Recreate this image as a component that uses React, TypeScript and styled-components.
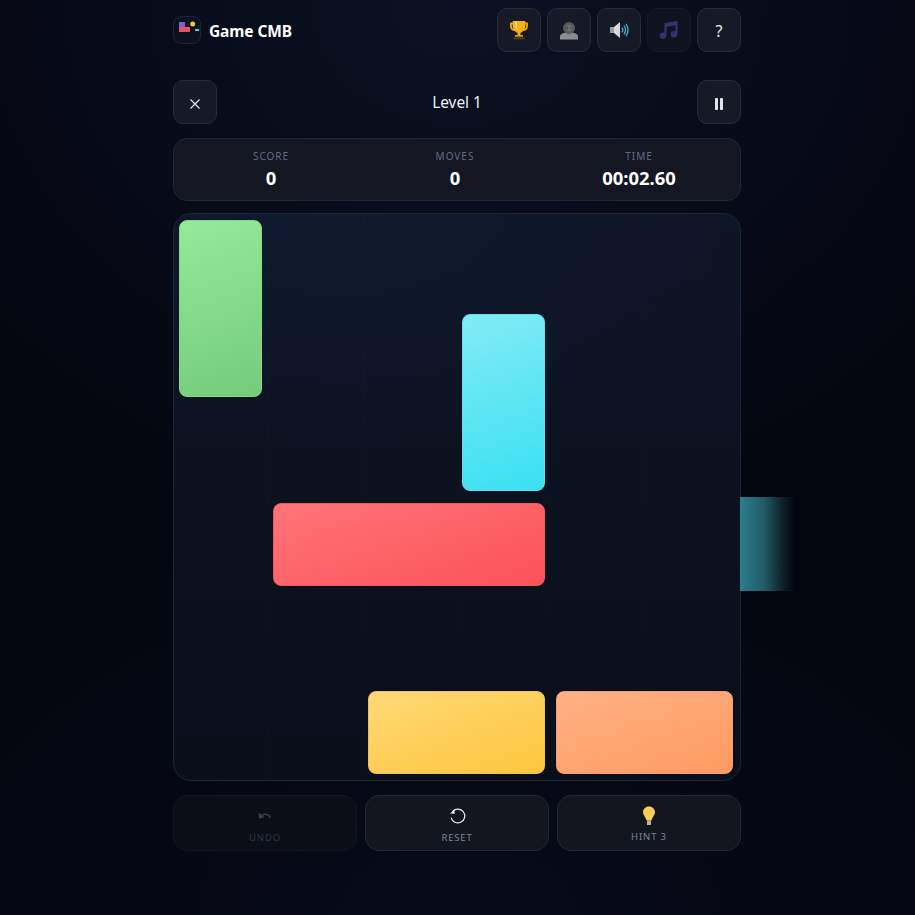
import React from "react";
import styled, { createGlobalStyle } from "styled-components";

const GlobalStyle = createGlobalStyle`
  html, body {
    margin: 0;
    padding: 0;
    height: 100%;
    overflow: hidden;
    background: #04060f;
    font-family: "Noto Sans", "Open Sans", sans-serif;
  }
`;

const Page = styled.div`
  width: 915px;
  height: 915px;
  padding-top: 8px;
  box-sizing: border-box;
  background:
    radial-gradient(ellipse 70% 60% at 50% 0%, #0b1122 0%, rgba(11, 17, 34, 0) 100%),
    radial-gradient(ellipse 70% 45% at 50% 100%, #070b18 0%, rgba(7, 11, 24, 0) 100%),
    #04060f;
`;

const Column = styled.div`
  width: 568px;
  margin-left: 173px;
  display: flex;
  flex-direction: column;
`;

const TopBar = styled.header`
  display: flex;
  align-items: center;
  justify-content: space-between;
  height: 44px;
  margin-bottom: 28px;
`;

const Brand = styled.div`
  display: flex;
  align-items: center;
  gap: 8px;
`;

const LogoBox = styled.div`
  width: 28px;
  height: 28px;
  box-sizing: border-box;
  border-radius: 8px;
  border: 1px solid #1b2537;
  background: #0c111f;
  display: flex;
  align-items: center;
  justify-content: center;
`;

const BrandName = styled.span`
  color: #fff;
  font-size: 15.5px;
  font-weight: 700;
  letter-spacing: -0.1px;
  margin-top: 1px;
`;

const IconRow = styled.div`
  display: flex;
  gap: 6px;
`;

const IconButton = styled.button<{ $dim?: boolean }>`
  width: 44px;
  height: 44px;
  padding: 0;
  box-sizing: border-box;
  border-radius: 10px;
  border: 1px solid ${(p) => (p.$dim ? "#151a28" : "#262c3b")};
  background: ${(p) => (p.$dim ? "#0f1320" : "#161a27")};
  color: #e8edf5;
  font-family: inherit;
  font-size: 16px;
  display: flex;
  align-items: center;
  justify-content: center;
`;

const HelpMark = styled.span`
  margin-top: 1px;
`;

const LevelBar = styled.div`
  display: flex;
  align-items: center;
  justify-content: space-between;
  height: 44px;
  margin-bottom: 14px;
`;

const LevelTitle = styled.div`
  color: #eef2f8;
  font-size: 15.4px;
  font-weight: 400;
  margin-top: 1px;
`;

const Stats = styled.section`
  height: 63px;
  box-sizing: border-box;
  border-radius: 14px;
  border: 1px solid #222735;
  background: #141622;
  display: grid;
  grid-template-columns: 1fr 1fr 1fr;
  padding: 0 9px 0 5px;
  margin-bottom: 12px;
`;

const Stat = styled.div`
  display: flex;
  flex-direction: column;
  align-items: center;
  padding-top: 10px;
`;

const StatLabel = styled.div`
  color: #636c88;
  font-size: 10px;
  line-height: 14px;
  letter-spacing: 1px;
`;

const StatValue = styled.div`
  color: #fff;
  font-size: 18.4px;
  line-height: 28px;
  font-weight: 700;
  margin-top: 1px;
`;

const Board = styled.main`
  position: relative;
  width: 568px;
  height: 568px;
  box-sizing: border-box;
  padding: 6px 7px 6px 5px;
  border: 1px solid #1f2533;
  border-radius: 18px;
  background:
    linear-gradient(rgba(255, 255, 255, 0.007) 1px, transparent 1px) 0 0 / 94.33px 94.33px,
    linear-gradient(90deg, rgba(255, 255, 255, 0.01) 1px, transparent 1px) 0 0 / 94.33px 94.33px,
    radial-gradient(ellipse 75% 40% at 30% 0%, #0f1a2f 0%, rgba(15, 26, 47, 0) 100%),
    linear-gradient(180deg, #0d1424 0%, #0c1120 45%, #0a0e19 100%);
  display: grid;
  grid-template-columns: repeat(6, 1fr);
  grid-template-rows: repeat(6, 1fr);
  gap: 11.5px;
  margin-bottom: 14px;
`;

const Block = styled.div<{ $from: string; $to: string; $col: string; $row: string; $edge: string }>`
  grid-column: ${(p) => p.$col};
  grid-row: ${(p) => p.$row};
  border-radius: 8px;
  box-sizing: border-box;
  border: 1px solid ${(p) => p.$edge};
  background: linear-gradient(160deg, ${(p) => p.$from}, ${(p) => p.$to});
`;

const ExitGlow = styled.div`
  position: absolute;
  left: 566px;
  top: 283px;
  width: 55px;
  height: 94px;
  background: linear-gradient(90deg, #2b7f8c 0%, #1f5a66 45%, rgba(20, 50, 60, 0.5) 80%, rgba(10, 20, 30, 0) 100%);
`;

const Actions = styled.div`
  display: grid;
  grid-template-columns: repeat(3, 1fr);
  gap: 8px;
  height: 56px;
`;

const ActionButton = styled.button<{ $off?: boolean }>`
  box-sizing: border-box;
  padding: 9px 0 0;
  border-radius: 14px;
  border: 1px solid ${(p) => (p.$off ? "#141722" : "#222733")};
  background: ${(p) => (p.$off ? "#0b0e17" : "#13161f")};
  font-family: inherit;
  display: flex;
  flex-direction: column;
  align-items: center;
  justify-content: flex-start;
`;

const ActionIcon = styled.span`
  height: 22px;
  display: flex;
  align-items: center;
  justify-content: center;
`;

const ActionLabel = styled.span<{ $off?: boolean; $raised?: boolean }>`
  color: ${(p) => (p.$off ? "#2f3441" : "#7c8499")};
  font-size: 9.5px;
  line-height: 14px;
  letter-spacing: 0.85px;
  margin-top: ${(p) => (p.$raised ? "3px" : "4px")};
`;

const LoweredSvg = styled.svg`
  margin-top: 3px;
`;

const Logo = () => (
  <svg width="26" height="26" viewBox="0 0 26 26">
    <rect x="5" y="5" width="6" height="6.500" fill="#7a5fd0" />
    <rect x="5" y="10" width="11" height="5" rx="0.500" fill="#ef4f5f" />
    <circle cx="18.700" cy="7" r="2.500" fill="#f3c23f" />
    <rect x="21" y="12" width="4.200" height="2" fill="#35d6c4" />
  </svg>
);

const Trophy = () => (
  <svg width="20" height="20" viewBox="0 0 20 20">
    <path d="M4.500 3.500H2v2.700C2 8.500 4 10 6.500 10.200M15.500 3.500H18v2.700c0 2.300-2 3.800-4.500 4" fill="#3a1d18" stroke="#f2aa14" strokeWidth="1.800" />
    <path d="M3.700 1h12.600v4.700c0 3.600-2.500 6.300-4.800 7v2.300h-3v-2.300C6.200 12 3.700 9.300 3.700 5.700z" fill="#f7b017" />
    <path d="M6 1.500h2v5c0 1.500.4 2.500 1 3.500C7 9.300 6 7 6 5z" fill="#ffd65f" />
    <rect x="6" y="15" width="8" height="1.800" fill="#e49c10" />
    <rect x="4.500" y="16.800" width="11" height="2.700" rx="0.500" fill="#43362a" />
  </svg>
);

const Bust = () => (
  <svg width="20" height="20" viewBox="0 0 20 20">
    <path d="M1 19.500v-2.800c0-2.800 3-4.200 9-4.200s9 1.400 9 4.200v2.800z" fill="#8b8d90" />
    <circle cx="10" cy="8" r="6" fill="#56585b" />
    <path d="M7.500 5.500c2-1 5-1 6 1 .5 2.500-1 5-3.500 5-2 0-3-2-2.500-6z" fill="#6b6d70" />
    <circle cx="8.500" cy="8" r="0.700" fill="#2b2c2e" />
    <circle cx="12" cy="8" r="0.700" fill="#2b2c2e" />
  </svg>
);

const Speaker = () => (
  <svg width="20" height="20" viewBox="0 0 20 20">
    <rect x="1" y="7" width="4" height="6" fill="#9a9ea3" />
    <path d="M5 7l6-5v16l-6-5z" fill="#d5d8dc" />
    <g fill="none" stroke="#3ab4cc" strokeWidth="1.300">
      <path d="M13 7.500c1 1.500 1 3.500 0 5" />
      <path d="M15 5.500c1.800 2.800 1.800 6.200 0 9" />
      <path d="M17 3.800c2.500 3.800 2.500 8.600 0 12.400" />
    </g>
  </svg>
);

const Notes = () => (
  <svg width="20" height="20" viewBox="0 0 20 20">
    <path d="M6.500 15.500V4l11-2v12" fill="none" stroke="#372f70" strokeWidth="2.200" />
    <path d="M6.500 4l11-2v3l-11 2z" fill="#372f70" />
    <circle cx="4" cy="15.700" r="3.200" fill="#372f70" />
    <circle cx="15" cy="14.200" r="3.200" fill="#372f70" />
  </svg>
);

const Cross = () => (
  <LoweredSvg width="12" height="12" viewBox="0 0 12 12">
    <path d="M1.500 1.500l9 9M10.500 1.500l-9 9" stroke="#e3e7ee" strokeWidth="1.200" fill="none" />
  </LoweredSvg>
);

const Pause = () => (
  <LoweredSvg width="8" height="12" viewBox="0 0 8 12">
    <rect x="0" y="0" width="3" height="12" rx="0.700" fill="#dfe4ec" />
    <rect x="5" y="0" width="3" height="12" rx="0.700" fill="#dfe4ec" />
  </LoweredSvg>
);

const UndoArrow = () => (
  <svg width="16" height="12" viewBox="0 0 16 12">
    <path d="M4 6c2.500-2.600 7-2.600 9.500 1.500" fill="none" stroke="#3a3d45" strokeWidth="1.600" />
    <path d="M1.500 2.500l.5 6 5.500-1z" fill="#3a3d45" />
  </svg>
);

const ResetArrow = () => (
  <svg width="17" height="17" viewBox="0 0 16 16">
    <path d="M3.500 3.200A6.500 6.500 0 1 1 2 9" fill="none" stroke="#e8edf3" strokeWidth="1.100" />
    <path d="M1 5.200l4.500.3-.6-4z" fill="#e8edf3" />
  </svg>
);

const Bulb = () => (
  <svg width="14" height="20" viewBox="0 0 14 20">
    <path d="M7 .5c3.400 0 6 2.500 6 5.600 0 2.800-2.300 4.500-3.500 8.400h-5C3.300 10.600 1 8.900 1 6.100 1 3 3.600.5 7 .5z" fill="#f7ce5c" />
    <rect x="5" y="14.500" width="4" height="4.500" fill="#b9b3a0" />
  </svg>
);

const blocks = [
  { col: "1", row: "1 / span 2", from: "#94ea98", to: "#74cb7a", edge: "#84d98a" },
  { col: "4", row: "2 / span 2", from: "#82ebf5", to: "#39e0f2", edge: "#5fe0ee" },
  { col: "2 / span 3", row: "4", from: "#ff7478", to: "#fb5258", edge: "#e9595f" },
  { col: "3 / span 2", row: "6", from: "#ffd977", to: "#fdc63c", edge: "#eec25a" },
  { col: "5 / span 2", row: "6", from: "#ffb186", to: "#ff9a5f", edge: "#eda076" },
];

const stats = [
  { label: "SCORE", value: "0" },
  { label: "MOVES", value: "0" },
  { label: "TIME", value: "00:02.60" },
];

export default function App() {
  return (
    <Page>
      <GlobalStyle />
      <Column>
        <TopBar>
          <Brand>
            <LogoBox>
              <Logo />
            </LogoBox>
            <BrandName>Game CMB</BrandName>
          </Brand>
          <IconRow>
            <IconButton aria-label="Leaderboard">
              <Trophy />
            </IconButton>
            <IconButton aria-label="Profile">
              <Bust />
            </IconButton>
            <IconButton aria-label="Sound">
              <Speaker />
            </IconButton>
            <IconButton $dim aria-label="Music">
              <Notes />
            </IconButton>
            <IconButton aria-label="Help">
              <HelpMark>?</HelpMark>
            </IconButton>
          </IconRow>
        </TopBar>

        <LevelBar>
          <IconButton aria-label="Close">
            <Cross />
          </IconButton>
          <LevelTitle>Level 1</LevelTitle>
          <IconButton aria-label="Pause">
            <Pause />
          </IconButton>
        </LevelBar>

        <Stats>
          {stats.map((s) => (
            <Stat key={s.label}>
              <StatLabel>{s.label}</StatLabel>
              <StatValue>{s.value}</StatValue>
            </Stat>
          ))}
        </Stats>

        <Board>
          {blocks.map((b) => (
            <Block key={b.col + b.row} $col={b.col} $row={b.row} $from={b.from} $to={b.to} $edge={b.edge} />
          ))}
          <ExitGlow />
        </Board>

        <Actions>
          <ActionButton $off>
            <ActionIcon>
              <UndoArrow />
            </ActionIcon>
            <ActionLabel $off>UNDO</ActionLabel>
          </ActionButton>
          <ActionButton>
            <ActionIcon>
              <ResetArrow />
            </ActionIcon>
            <ActionLabel>RESET</ActionLabel>
          </ActionButton>
          <ActionButton>
            <ActionIcon>
              <Bulb />
            </ActionIcon>
            <ActionLabel $raised>HINT 3</ActionLabel>
          </ActionButton>
        </Actions>
      </Column>
    </Page>
  );
}
